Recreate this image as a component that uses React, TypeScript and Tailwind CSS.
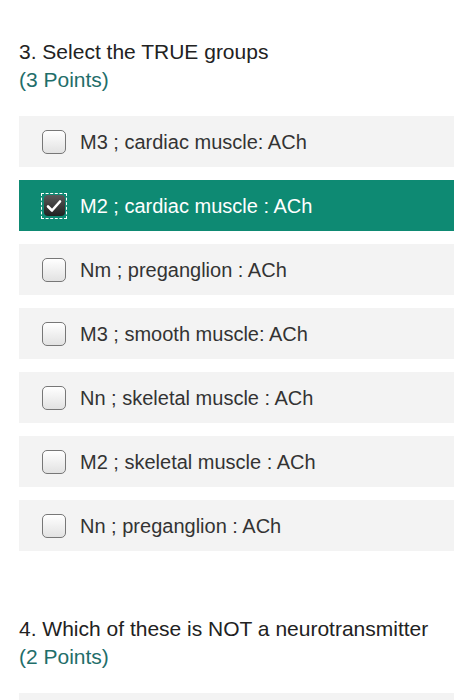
const options = [
  { label: 'M3 ; cardiac muscle: ACh', checked: false },
  { label: 'M2 ; cardiac muscle : ACh', checked: true },
  { label: 'Nm ; preganglion : ACh', checked: false },
  { label: 'M3 ; smooth muscle: ACh', checked: false },
  { label: 'Nn ; skeletal muscle : ACh', checked: false },
  { label: 'M2 ; skeletal muscle : ACh', checked: false },
  { label: 'Nn ; preganglion : ACh', checked: false },
]

function Box({ checked }: { checked: boolean }) {
  if (checked) {
    return (
      <span className="flex h-[26px] w-[26px] items-center justify-center border border-dashed border-white">
        <span className="flex h-[21px] w-[21px] items-center justify-center rounded-[4px] bg-gradient-to-b from-[#5a5a5a] to-[#222]">
          <svg width="16" height="14" viewBox="0 0 16 14">
            <path d="M2 7.5 L6 11.5 L14 2.5" fill="none" stroke="white" strokeWidth="2.6" strokeLinecap="round" strokeLinejoin="round" />
          </svg>
        </span>
      </span>
    )
  }
  return (
    <span className="flex h-[26px] w-[26px] items-center justify-center">
      <span className="h-[24px] w-[24px] rounded-[5px] border-[1.5px] border-[#777] bg-gradient-to-b from-white to-[#e2e2e2]" />
    </span>
  )
}

export default function App() {
  return (
    <div className="h-[700px] overflow-hidden bg-white pl-[19px] pr-[5px] pt-[38px] text-[#222]" style={{ fontFamily: '"Liberation Sans", Arial, sans-serif' }}>
      <div className="text-[21px] leading-[28px]">3. Select the TRUE groups</div>
      <div className="text-[21px] leading-[28px] text-[#1f6e6a]">(3 Points)</div>

      <div className="mt-[22px] flex flex-col gap-[13px]">
        {options.map((o) => (
          <div
            key={o.label}
            className={
              'flex h-[51px] items-center gap-[13px] pl-[22px] text-[20px] ' +
              (o.checked ? 'bg-[#0e8a73] text-white' : 'bg-[#f3f3f3] text-[#333]')
            }
          >
            <Box checked={o.checked} />
            <span>{o.label}</span>
          </div>
        ))}
      </div>

      <div className="mt-[64px] text-[21px] leading-[28px]">4. Which of these is NOT a neurotransmitter</div>
      <div className="text-[21px] leading-[28px] text-[#1f6e6a]">(2 Points)</div>
      <div className="mt-[22px] h-[51px] bg-[#f3f3f3]" />
    </div>
  )
}
